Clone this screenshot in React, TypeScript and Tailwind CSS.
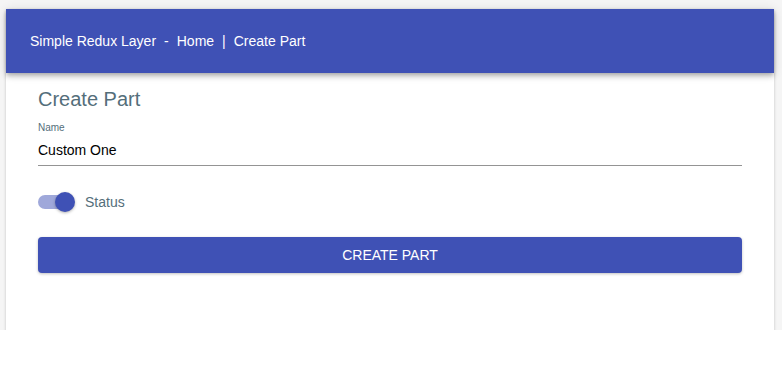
import React from 'react';

const App: React.FC = () => {
  return (
    <div className="min-h-screen bg-white font-['Liberation_Sans',Arial,sans-serif]">
      <div className="h-[330px] overflow-hidden bg-[#f5f5f5] pl-[6px] pr-[8px] pt-[9px]">
        <div className="h-[360px] bg-white shadow-[0_1px_3px_rgba(0,0,0,0.2)]">
          {/* App bar */}
          <header className="h-16 bg-[#3f51b5] px-6 flex items-center text-white text-sm shadow-[0_2px_4px_-1px_rgba(0,0,0,0.2),0_4px_5px_0_rgba(0,0,0,0.14),0_1px_10px_0_rgba(0,0,0,0.12)] relative">
            <span>Simple Redux Layer</span>
            <span className="mx-[8px]">-</span>
            <span>Home</span>
            <span className="mx-[8px]">|</span>
            <span>Create Part</span>
          </header>

          {/* Form */}
          <div className="px-8 pt-3">
            <h1 className="text-[20px] leading-7 text-[#546e7a]">Create Part</h1>

            <div className="mt-2">
              <label className="block text-[10px] leading-[14px] text-[#546e7a]">Name</label>
              <div className="mt-[5px] pb-[5px] border-b border-[#949494] text-sm leading-5 text-black">
                Custom One
              </div>
            </div>

            <div className="mt-[26px] flex items-center h-5">
              <div className="relative w-[36px] h-5 flex items-center">
                <div className="w-[36px] h-[14px] rounded-full bg-[#9fa8da]" />
                <div className="absolute left-[17px] top-0 w-5 h-5 rounded-full bg-[#3f51b5] shadow-[0_1px_3px_rgba(0,0,0,0.3)]" />
              </div>
              <span className="ml-[11px] text-sm text-[#546e7a]">Status</span>
            </div>

            <button className="mt-[25px] w-full h-9 rounded bg-[#3f51b5] text-white text-sm uppercase shadow-[0_1px_3px_rgba(0,0,0,0.25)]">
              Create Part
            </button>
          </div>
        </div>
      </div>
    </div>
  );
};

export default App;
